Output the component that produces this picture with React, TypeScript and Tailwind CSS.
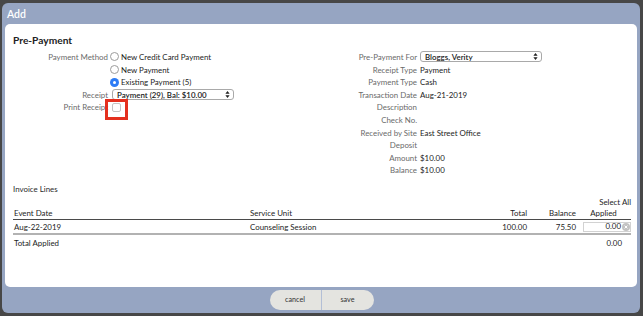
import React from 'react';

const Radio = ({ checked }: { checked?: boolean }) =>
  checked ? (
    <span className="w-[9px] h-[9px] rounded-full bg-[#2d7cf6] flex items-center justify-center shrink-0">
      <span className="w-[3px] h-[3px] rounded-full bg-white" />
    </span>
  ) : (
    <span className="w-[9px] h-[9px] rounded-full border border-[#9c9c9c] bg-white shrink-0" />
  );

const Arrows = () => (
  <svg width="5" height="7" viewBox="0 0 5 7">
    <path d="M2.5 0L4.6 2.7H0.4z M2.5 7L4.6 4.3H0.4z" fill="#222" />
  </svg>
);

const Select = ({ value, width }: { value: string; width: string }) => (
  <div className={`h-[11px] ${width} rounded-[3px] border border-[#a9a9a9] bg-white flex items-center justify-between pl-[4px] pr-[3px] font-semibold text-[#1a1a1a]`}>
    <span className="leading-[10px]">{value}</span>
    <Arrows />
  </div>
);

const Row = ({ label, children, gap = 'pl-[2px]' }: any) => (
  <div className="h-[12.6px] flex items-center leading-[12px]">
    <div className="w-[95px] shrink-0 text-right text-[#6a6a6a] whitespace-nowrap">{label}</div>
    <div className={`flex items-center gap-[2px] text-[#1d1d1d] whitespace-nowrap ${gap}`}>{children}</div>
  </div>
);

const App = () => {
  const right: [string, string][] = [
    ['Receipt Type', 'Payment'],
    ['Payment Type', 'Cash'],
    ['Transaction Date', 'Aug-21-2019'],
    ['Description', ''],
    ['Check No.', ''],
    ['Received by Site', 'East Street Office'],
    ['Deposit', ''],
    ['Amount', '$10.00'],
    ['Balance', '$10.00'],
  ];

  return (
    <div className="w-[643px] h-[316px] bg-[#474747] pt-[3px] pl-[2px] font-['Lato',sans-serif] text-[7.9px] leading-[12px] overflow-hidden">
      <div className="w-[638px] h-[310px] rounded-[6px] bg-[#96a5c2] flex flex-col">
        <div className="h-[21px] flex items-center pl-[5px] text-white text-[10.5px] font-semibold">Add</div>

        <div className="mx-[3px] flex-1 bg-white rounded-[5px] pl-[8px] pr-[6px] pt-[8px]">
          <div className="h-[16px] flex items-center text-[10.2px] leading-[16px] font-bold text-[#222]">Pre-Payment</div>

          {/* form */}
          <div className="flex mt-[2.7px]">
            <div className="w-[309px] shrink-0">
              <Row label="Payment Method"><Radio />New Credit Card Payment</Row>
              <Row label=""><Radio />New Payment</Row>
              <Row label=""><Radio checked />Existing Payment (5)</Row>
              <Row label="Receipt" gap="pl-[4px]">
                <Select value="Payment (29), Bal: $10.00" width="w-[122px]" />
              </Row>
              <Row label="Print Receipt" gap="pl-[3.5px]">
                <span className="relative w-[9px] h-[9px] rounded-[2px] border border-[#c4c4c4] bg-white">
                  <span className="absolute -left-[8px] -top-[5px] w-[23px] h-[21px] border-[3px] border-[#e4301f]" />
                </span>
              </Row>
            </div>
            <div className="flex-1">
              <Row label="Pre-Payment For" gap="pl-[3px]">
                <Select value="Bloggs, Verity" width="w-[122px]" />
              </Row>
              {right.map(([l, v]) => (
                <Row key={l} label={l} gap="pl-[3px]">{v}</Row>
              ))}
            </div>
          </div>

          <div className="mt-[6px] h-[12.5px] flex items-center text-[#2a2a2a]">Invoice Lines</div>

          {/* invoice table */}
          <table className="table-fixed w-[618px] text-[#1d1d1d]">
            <colgroup>
              <col className="w-[237px]" />
              <col className="w-[227px]" />
              <col className="w-[50px]" />
              <col className="w-[49px]" />
              <col className="w-[55px]" />
            </colgroup>
            <thead>
              <tr className="border-b border-[#4a4a4a]">
                <th className="font-normal text-left align-bottom pl-[1px] h-[11.5px] pb-[0px]">Event Date</th>
                <th className="font-normal text-left align-bottom">Service Unit</th>
                <th className="font-normal text-right align-bottom">Total</th>
                <th className="font-normal text-right align-bottom">Balance</th>
                <th className="font-normal align-bottom pt-[1px]">
                  <div className="h-[11.5px] flex items-center justify-end">Select All</div>
                  <div className="h-[11.5px] flex items-center justify-center">Applied</div>
                </th>
              </tr>
            </thead>
            <tbody>
              <tr className="border-b-2 border-[#b2b2b2]">
                <td className="h-[14.5px] pl-[1px]">Aug-22-2019</td>
                <td>Counseling Session</td>
                <td className="text-right">100.00</td>
                <td className="text-right">75.50</td>
                <td className="pl-[7px]">
                  <div className="h-[10px] w-[48px] border border-[#d2d2d2] flex items-center justify-end leading-[9px]">
                    <span>0.00</span>
                    <span className="ml-[1px] w-[8px] h-[8px] rounded-full bg-[#c2c2c2] flex items-center justify-center">
                      <svg width="4" height="4" viewBox="0 0 4 4"><path d="M0.6 0.6L3.4 3.4M3.4 0.6L0.6 3.4" stroke="#fff" strokeWidth="1" /></svg>
                    </span>
                  </div>
                </td>
              </tr>
              <tr>
                <td className="h-[17px] pl-[1px]">Total Applied</td>
                <td />
                <td />
                <td />
                <td className="text-right pr-[9px]">0.00</td>
              </tr>
            </tbody>
          </table>
        </div>

        <div className="h-[26px] flex items-center justify-center">
          <div className="flex h-[20px] rounded-full bg-[#e4e4e0] overflow-hidden text-[7.2px] text-[#333] ml-[1px]">
            <div className="w-[52px] flex items-center justify-center border-r border-[#b3bfd6]">cancel</div>
            <div className="w-[52px] flex items-center justify-center">save</div>
          </div>
        </div>
      </div>
    </div>
  );
};

export default App;
